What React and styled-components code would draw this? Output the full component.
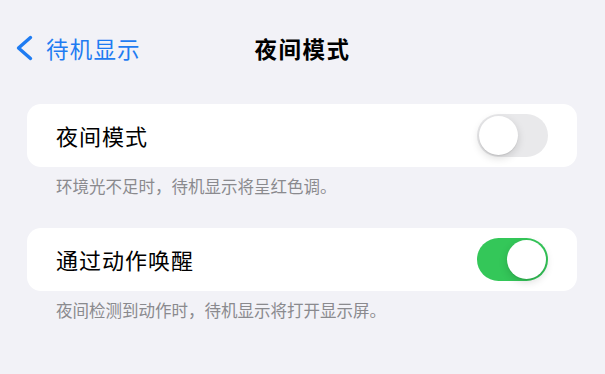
import React, { useState } from 'react';
import styled, { createGlobalStyle } from 'styled-components';

const GlobalStyle = createGlobalStyle`
  html, body {
    margin: 0;
    padding: 0;
    background: #f2f2f7;
  }
  body {
    font-family: "Noto Sans CJK SC", "Noto Sans", sans-serif;
    -webkit-font-smoothing: antialiased;
  }
`;

const Page = styled.div`
  width: 605px;
  height: 374px;
  background: #f2f2f7;
  overflow: hidden;
`;

const NavBar = styled.div`
  position: relative;
  height: 96px;
  display: flex;
  align-items: center;
  justify-content: center;
`;

const BackButton = styled.div`
  position: absolute;
  left: 15px;
  top: 0;
  height: 96px;
  display: flex;
  align-items: center;
  gap: 13px;
  color: #1f7cf2;
  font-size: 22.5px;
  letter-spacing: 1.2px;
`;

const Title = styled.div`
  font-size: 22.5px;
  font-weight: 700;
  color: #000;
  letter-spacing: 1.5px;
`;

const Content = styled.div`
  padding: 8px 28px 0 27px;
  display: flex;
  flex-direction: column;
`;

const Section = styled.div`
  display: flex;
  flex-direction: column;
  margin-bottom: 31px;
`;

const Card = styled.div`
  height: 63px;
  background: #fff;
  border-radius: 14px;
  display: flex;
  align-items: center;
  justify-content: space-between;
  padding: 0 29px;
`;

const Label = styled.div`
  font-size: 22px;
  color: #000;
  letter-spacing: 1px;
  margin-top: -2px;
`;

const Footnote = styled.div`
  padding: 8px 29px 0;
  font-size: 16.5px;
  line-height: 22px;
  color: #8a8a8e;
`;

const Track = styled.div`
  width: 71px;
  height: 43px;
  border-radius: 22px;
  background: ${(p) => (p.on ? '#34c759' : '#e9e9eb')};
  position: relative;
  flex-shrink: 0;
`;

const Knob = styled.div`
  position: absolute;
  top: 2px;
  left: ${(p) => (p.on ? '30px' : '2px')};
  width: 39px;
  height: 39px;
  border-radius: 50%;
  background: #fff;
  box-shadow: 0 3px 8px rgba(0, 0, 0, 0.15), 0 1px 1px rgba(0, 0, 0, 0.08);
`;

const Toggle = ({ on, onClick }) => (
  <Track on={on} onClick={onClick}>
    <Knob on={on} />
  </Track>
);

const Chevron = () => (
  <svg width="18" height="26" viewBox="0 0 18 26">
    <path d="M15.5 2.5 L3.5 13 L15.5 23.5" fill="none" stroke="#1f7cf2" strokeWidth="3.4" strokeLinecap="round" strokeLinejoin="round" />
  </svg>
);

export default function App() {
  const [night, setNight] = useState(false);
  const [wake, setWake] = useState(true);

  return (
    <Page>
      <GlobalStyle />
      <NavBar>
        <BackButton>
          <Chevron />
          待机显示
        </BackButton>
        <Title>夜间模式</Title>
      </NavBar>
      <Content>
        <Section>
          <Card>
            <Label>夜间模式</Label>
            <Toggle on={night} onClick={() => setNight(!night)} />
          </Card>
          <Footnote>环境光不足时，待机显示将呈红色调。</Footnote>
        </Section>
        <Section>
          <Card>
            <Label>通过动作唤醒</Label>
            <Toggle on={wake} onClick={() => setWake(!wake)} />
          </Card>
          <Footnote>夜间检测到动作时，待机显示将打开显示屏。</Footnote>
        </Section>
      </Content>
    </Page>
  );
}
